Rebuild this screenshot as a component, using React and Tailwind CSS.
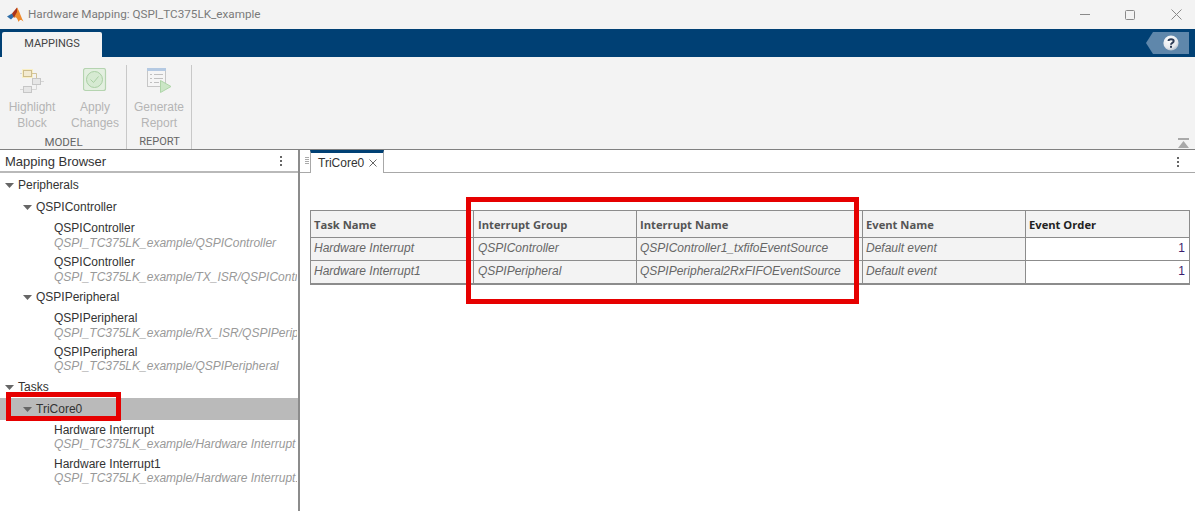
const F = "font-['Liberation_Sans',Arial,sans-serif]";

function Caret({ className = "" }) {
  return (
    <svg width="9" height="5" viewBox="0 0 9 5" className={className}>
      <path d="M0 0H9L4.500 5Z" fill="#666" />
    </svg>
  );
}

function Group({ label, indent, selected }) {
  return (
    <div className={`h-[22px] flex items-center ${indent} ${selected ? "bg-[#bababa]" : ""}`}>
      <Caret className="mr-[4px]" />
      <span className="text-[12px] text-[#333]">{label}</span>
    </div>
  );
}

function Item({ name, path, tight }) {
  return (
    <div className="h-[34px] w-[297px] pl-[54px] pt-[3px] whitespace-nowrap overflow-hidden">
      <div className={`text-[12px] text-[#333] ${tight ? "leading-[14px]" : "leading-[15px]"}`}>{name}</div>
      <div className="text-[12px] leading-[14px] italic text-[#999]">{path}</div>
    </div>
  );
}

function RibbonButton({ icon, l1, l2, w }) {
  return (
    <div className={`${w} shrink-0 flex flex-col items-center`}>
      <div className="h-[30px] flex items-center justify-center">{icon}</div>
      <div className="mt-[4px] text-[12px] leading-[16px] text-[#b5b5b5] text-center whitespace-nowrap">
        {l1}
        <br />
        {l2}
      </div>
    </div>
  );
}

const Highlight = (
  <svg width="25" height="27" viewBox="0 0 25 27" fill="none">
    <path d="M0 6.500H3M11 6.500H16.500V11M21 14.500H24M0 22.500H3M12 22.500H16.500V18" stroke="#d6d6d6" />
    <rect x="2" y="2" width="11" height="9" fill="#f9efc4" />
    <rect x="3.500" y="3.500" width="8" height="6" fill="#f3ebd2" stroke="#cdbd8e" />
    <path d="M11.500 6.500H16.500V11" stroke="#d3c49a" />
    <rect x="12.500" y="11.500" width="8" height="6" fill="#e6e6e6" stroke="#c6c6c6" />
    <rect x="3.500" y="19.500" width="8" height="6" fill="#e6e6e6" stroke="#c6c6c6" />
  </svg>
);

const Apply = (
  <svg width="24" height="24" viewBox="0 0 24 24" fill="none">
    <rect x="0.500" y="0.500" width="22" height="22" rx="2" fill="#e3efe0" stroke="#b5d4b0" strokeWidth="1.200" />
    <circle cx="11.500" cy="11.500" r="8" fill="#d6ead2" stroke="#a9cfa3" />
    <path d="M7.500 11.500L10.500 14.500L15.500 8.500" stroke="#a9cfa3" strokeWidth="1" />
  </svg>
);

const Report = (
  <svg width="25" height="25" viewBox="0 0 25 25" fill="none">
    <rect x="0.500" y="0.500" width="18" height="18" fill="#f5f5f5" stroke="#c6c6c6" />
    <rect x="0" y="0" width="19" height="3" fill="#b4c9e2" />
    <path d="M3 6.500H5M7 6.500H16M3 10.500H5M7 10.500H16M3 14.500H5M7 14.500H12" stroke="#c0c0c0" />
    <path d="M13.500 12.500L24 18.500L13.500 24.500Z" fill="#cbe6c6" stroke="#aed5a8" />
  </svg>
);

function HelpIcon() {
  return (
    <svg width="16" height="16" viewBox="0 0 16 16">
      <defs>
        <radialGradient id="hg" cx="40%" cy="30%" r="75%">
          <stop offset="0%" stopColor="#ffffff" />
          <stop offset="70%" stopColor="#e4e8ed" />
          <stop offset="100%" stopColor="#a9b6c4" />
        </radialGradient>
      </defs>
      <circle cx="8" cy="8" r="7.600" fill="url(#hg)" />
      <path d="M5.500 6C5.500 3.600 10.700 3.600 10.700 6C10.700 8 8 7.700 8 9.700" fill="none" stroke="#2c3b55" strokeWidth="1.900" />
      <rect x="7" y="10.800" width="2" height="2" fill="#2c3b55" />
    </svg>
  );
}

function Logo() {
  return (
    <svg width="17" height="16" viewBox="0 0 17 16">
      <path d="M0 9.500L5 6.500L7.500 9L4 12.500Z" fill="#2f6ea8" />
      <path d="M5 6.500L10 0.500L11.500 5L7 11Z" fill="#a8341c" />
      <path d="M10 0.500C12 3 14.500 11 16.500 14.500C14.500 13 13 12 11.500 15C10.500 11.500 9 9.500 7 10.500L10 5Z" fill="#ee8a2c" />
    </svg>
  );
}

function Kebab({ className = "" }) {
  return (
    <div className={`flex flex-col gap-[2px] ${className}`}>
      <span className="w-[2px] h-[2px] bg-[#666]" />
      <span className="w-[2px] h-[2px] bg-[#666]" />
      <span className="w-[2px] h-[2px] bg-[#666]" />
    </div>
  );
}

const headCls = "pl-[3px] pt-[2px] text-left align-middle font-bold text-[11.200px] text-[#555] border border-[#8c8c8c] bg-[#f3f3f3] font-['Open_Sans',sans-serif]";
const cellCls = "pl-[3px] pb-[2px] align-middle italic text-[12px] text-[#666] border border-[#8c8c8c] bg-[#f3f3f3]";

function Row({ a, b, c, d }) {
  return (
    <tr className="h-[23px]">
      <td className={cellCls}>{a}</td>
      <td className={`${cellCls} !pl-[4px]`}>{b}</td>
      <td className={cellCls}>{c}</td>
      <td className={cellCls}>{d}</td>
      <td className="px-[4px] pb-[2px] text-right align-middle text-[12px] text-[#3a1d6e] border border-[#8c8c8c] bg-white">1</td>
    </tr>
  );
}

export default function App() {
  return (
    <div className={`${F} relative w-[1195px] h-[511px] overflow-hidden bg-white flex flex-col`}>
      {/* Title bar */}
      <div className="h-[29px] bg-[#f3f3f3] flex items-center pl-[7px] shrink-0">
        <Logo />
        <span className="ml-[4px] text-[11.700px] text-[#7a7a7a] font-['Roboto',sans-serif]">Hardware Mapping: QSPI_TC375LK_example</span>
        <div className="ml-auto flex items-center">
          <svg width="10" height="1" className="mr-[35px]"><rect width="10" height="1" fill="#8a8a8a" /></svg>
          <svg width="10" height="10" className="mr-[36px]"><rect x="0.500" y="0.500" width="9" height="9" rx="1" fill="none" stroke="#8a8a8a" /></svg>
          <svg width="11" height="11" className="mr-[13px]"><path d="M0.500 0.500L10.500 10.500M10.500 0.500L0.500 10.500" stroke="#8a8a8a" /></svg>
        </div>
      </div>

      {/* Blue tab strip */}
      <div className="h-[28px] bg-[#004074] flex items-end pl-[2px] relative shrink-0">
        <div className="w-[100px] h-[25px] bg-[#f3f3f3] rounded-t-[2px] flex items-center justify-center text-[11px] text-[#444] font-['Roboto',sans-serif]">
          MAPPINGS
        </div>
        <div className="absolute right-[6px] top-[3px] w-[43px] h-[22px] bg-[#5f87ab] [clip-path:polygon(7px_0,100%_0,100%_100%,7px_100%,0_50%)] flex items-center justify-end pr-[10px]">
          <HelpIcon />
        </div>
      </div>

      {/* Toolstrip */}
      <div className="h-[92px] bg-[#f3f3f3] border-b border-[#808080] flex relative shrink-0 box-content">
        <div className="w-[127px] pt-[8px] flex flex-col relative">
          <div className="flex h-[70px] pl-[5px]">
            <RibbonButton icon={Highlight} l1="Highlight" l2="Block" w="w-[54px]" />
            <RibbonButton icon={Apply} l1="Apply" l2="Changes" w="w-[72px]" />
          </div>
          <div className="pt-[1px] text-center text-[11.500px] leading-[14px] text-[#666] font-['Roboto',sans-serif]">MODEL</div>
          <div className="absolute right-0 top-[8px] bottom-0 w-px bg-[#c8c8c8]" />
        </div>
        <div className="w-[65px] pt-[8px] flex flex-col relative">
          <div className="flex h-[70px]">
            <RibbonButton icon={Report} l1="Generate" l2="Report" w="w-[64px]" />
          </div>
          <div className="pt-[1px] text-center text-[11px] leading-[14px] text-[#666] font-['Roboto',sans-serif]">REPORT</div>
          <div className="absolute right-0 top-[8px] bottom-0 w-px bg-[#c8c8c8]" />
        </div>
        <svg width="11" height="10" className="absolute right-[6px] bottom-[1px]">
          <rect width="11" height="2" fill="#a9a9a9" />
          <path d="M5.500 3L11 10H0Z" fill="#a9a9a9" />
        </svg>
      </div>

      {/* Body */}
      <div className="flex-1 flex min-h-0">
        {/* Browser */}
        <div className="w-[300px] shrink-0 border-r-2 border-[#8c8c8c] flex flex-col overflow-hidden">
          <div className="h-[23px] border-b-2 border-[#b9b9b9] flex items-center pl-[5px] pr-[16px] pt-[2px] shrink-0">
            <span className="text-[13px] text-[#333]">Mapping Browser</span>
            <Kebab className="ml-auto -mt-[2px]" />
          </div>
          <div className="flex flex-col pt-[1px]">
            <Group label="Peripherals" indent="pl-[5px]" />
            <Group label="QSPIController" indent="pl-[23px]" />
            <Item name="QSPIController" path="QSPI_TC375LK_example/QSPIController" />
            <Item name="QSPIController" path="QSPI_TC375LK_example/TX_ISR/QSPIController" />
            <Group label="QSPIPeripheral" indent="pl-[23px]" />
            <Item name="QSPIPeripheral" path="QSPI_TC375LK_example/RX_ISR/QSPIPeripheral" />
            <Item tight name="QSPIPeripheral" path="QSPI_TC375LK_example/QSPIPeripheral" />
            <Group label="Tasks" indent="pl-[5px]" />
            <Group label="TriCore0" indent="pl-[23px]" selected />
            <Item tight name="Hardware Interrupt" path="QSPI_TC375LK_example/Hardware Interrupt" />
            <Item tight name="Hardware Interrupt1" path="QSPI_TC375LK_example/Hardware Interrupt1" />
          </div>
        </div>

        {/* Document area */}
        <div className="flex-1 flex flex-col min-w-0">
          <div className="h-[23px] border-b border-[#a8a8a8] flex items-stretch relative shrink-0">
            <div className="w-[10px] flex flex-col gap-[1px] items-center pt-[7px] pl-[4px]">
              <span className="w-[4px] h-px bg-[#aaa]" />
              <span className="w-[4px] h-px bg-[#aaa]" />
              <span className="w-[4px] h-px bg-[#aaa]" />
              <span className="w-[4px] h-px bg-[#aaa]" />
            </div>
            <div className="w-[74px] h-[23px] bg-white border-t-[3px] border-t-[#004074] border-x border-x-[#a8a8a8] flex items-center pl-[7px] text-[12px] text-[#333] relative z-10">
              TriCore0
              <svg width="8" height="8" className="ml-[5px]"><path d="M0.500 0.500L7.500 7.500M7.500 0.500L0.500 7.500" stroke="#666" /></svg>
            </div>
            <Kebab className="absolute right-[16px] top-[7px]" />
          </div>
          <div className="flex-1 pl-[10px] pr-[6px] pt-[37px]">
            <table className="w-[879px] table-fixed border-collapse border-b-2 border-[#8c8c8c]">
              <colgroup>
                <col className="w-[163px]" />
                <col className="w-[163px]" />
                <col className="w-[226px]" />
                <col className="w-[163px]" />
                <col className="w-[164px]" />
              </colgroup>
              <thead>
                <tr className="h-[27px]">
                  <th className={headCls}>Task Name</th>
                  <th className={`${headCls} !pl-[4px]`}>Interrupt Group</th>
                  <th className={headCls}>Interrupt Name</th>
                  <th className={headCls}>Event Name</th>
                  <th className={`${headCls} !text-[#222]`}>Event Order</th>
                </tr>
              </thead>
              <tbody>
                <Row a="Hardware Interrupt" b="QSPIController" c="QSPIController1_txfifoEventSource" d="Default event" />
                <Row a="Hardware Interrupt1" b="QSPIPeripheral" c="QSPIPeripheral2RxFIFOEventSource" d="Default event" />
              </tbody>
            </table>
          </div>
        </div>
      </div>

      {/* Red annotations */}
      <div className="absolute left-[466px] top-[197px] w-[393px] h-[107px] border-[5px] border-[#e60000] pointer-events-none" />
      <div className="absolute left-[6px] top-[392px] w-[115px] h-[29px] border-[5px] border-[#e60000] pointer-events-none" />
    </div>
  );
}
